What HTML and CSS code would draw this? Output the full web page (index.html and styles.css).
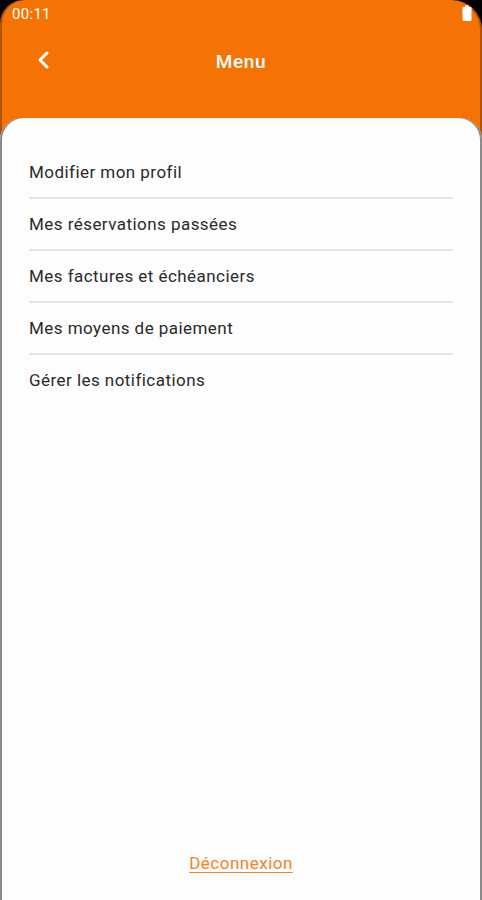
FILE: index.html
```html
<!DOCTYPE html>
<html lang="fr">
<head>
    <meta charset="UTF-8">
    <meta name="viewport" content="width=device-width, initial-scale=1.0">
    <title>Menu</title>
    <link rel="stylesheet" href="styles.css">
</head>
<body>
    <div class="screen">
        <div class="status-bar">
            <span class="time">00:11</span>
            <svg class="battery" width="10" height="16" viewBox="0 0 10 16">
                <path d="M3 0.5h4v1.5h1.5a1 1 0 0 1 1 1v12a1 1 0 0 1-1 1h-7a1 1 0 0 1-1-1v-12a1 1 0 0 1 1-1h1.5z" fill="#fff"/>
            </svg>
        </div>
        <div class="toolbar">
            <button class="back" aria-label="Retour">
                <svg width="24" height="24" viewBox="0 0 24 24">
                    <path d="M15 5 L8 12 L15 19" fill="none" stroke="#fff" stroke-width="3" stroke-linecap="round" stroke-linejoin="round"/>
                </svg>
            </button>
            <h1>Menu</h1>
        </div>
        <div class="card">
            <ul class="menu">
                <li>Modifier mon profil</li>
                <li>Mes réservations passées</li>
                <li>Mes factures et échéanciers</li>
                <li>Mes moyens de paiement</li>
                <li>Gérer les notifications</li>
            </ul>
            <a class="logout" href="#">Déconnexion</a>
        </div>
    </div>
</body>
</html>
```

FILE: styles.css
```css
body {
    margin: 0;
    background-color: #000;
    font-family: Roboto, "Noto Sans", Arial, sans-serif;
}
.screen {
    display: flex;
    flex-direction: column;
    height: 900px;
    background-color: #f47304;
    border-radius: 24px 30px 0 0;
    box-shadow: inset 2px 0 rgba(0, 0, 0, 0.28), inset -2px 0 rgba(0, 0, 0, 0.28);
}
.status-bar {
    display: flex;
    align-items: center;
    justify-content: space-between;
    height: 28px;
    padding: 0 10px 0 12px;
    color: #fff;
    font-size: 15px;
    letter-spacing: 0.3px;
}
.battery {
    margin-top: -2px;
}
.toolbar {
    position: relative;
    display: flex;
    align-items: center;
    justify-content: center;
    height: 66px;
}
.toolbar h1 {
    margin: 0;
    color: #fff;
    font-size: 19px;
    font-weight: 500;
    letter-spacing: 0.6px;
}
.back {
    position: absolute;
    left: 32px;
    top: 20px;
    padding: 0;
    border: none;
    background: none;
    cursor: pointer;
}
.card {
    display: flex;
    flex-direction: column;
    flex: 1;
    margin-top: 24px;
    background-color: #fdfdfd;
    border-radius: 22px 22px 0 0;
    box-shadow: inset 2px 0 #8a8a8a, inset -2px 0 #8a8a8a;
}
.menu {
    list-style: none;
    margin: 0;
    padding: 29px 29px 0;
}
.menu li {
    display: flex;
    align-items: center;
    height: 50px;
    border-bottom: 2px solid #e6e6e6;
    color: #2a2a2a;
    font-size: 17px;
    letter-spacing: 0.45px;
}
.menu li:last-child {
    border-bottom: none;
}
.logout {
    align-self: center;
    margin: auto 0 27px;
    color: #f3822a;
    font-size: 17px;
    letter-spacing: 0.5px;
    text-decoration: underline;
    text-underline-offset: 3px;
}
```
